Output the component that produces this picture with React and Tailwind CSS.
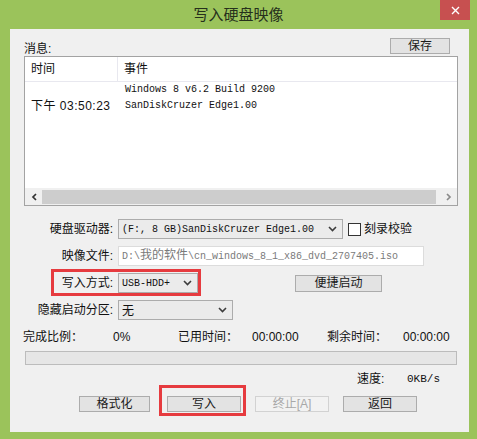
import React from "react";

const Chevron = () => (
  <svg width="9" height="6" viewBox="0 0 9 6" className="shrink-0">
    <path d="M1 1 L4.5 4.5 L8 1" fill="none" stroke="#3c3c3c" strokeWidth="1.6" />
  </svg>
);

// combo box with the little chevron on the right
const Combo = ({ value, className }) => (
  <div
    className={`h-[20px] border border-[#acacac] bg-[#ebebeb] flex items-center pl-[3px] pr-[5px] ${className}`}
  >
    <span className="flex-1 text-[10px] [font-family:'Liberation_Mono','Noto_Sans_CJK_SC',monospace] text-[#111] whitespace-nowrap overflow-hidden">
      {value}
    </span>
    <Chevron />
  </div>
);

const Btn = ({ children, className, disabled }) => (
  <div
    className={`h-[16px] border flex items-center justify-center text-[12px] leading-none ${
      disabled
        ? "border-[#d2d2d2] bg-[#f2f2f2] text-[#a8a8a8]"
        : "border-[#acacac] bg-[#e3e3e3] text-[#1a1a1a]"
    } ${className}`}
  >
    {children}
  </div>
);

export default function App() {
  return (
    <div className="w-[477px] h-[439px] bg-[#9bc35b] flex flex-col [font-family:'Liberation_Sans','Noto_Sans_CJK_SC',sans-serif] text-[#111] overflow-hidden">
      {/* title bar */}
      <div className="h-[29px] flex items-start shrink-0">
        <div className="w-[37px]" />
        <div className="flex-1 text-center text-[15px] leading-[29px] text-[#26301c]">写入硬盘映像</div>
        <div className="w-[30px] h-[20px] bg-[#c75050] flex items-center justify-center">
          <svg width="9" height="9" viewBox="0 0 9 9">
            <path d="M1 1 L8 8 M8 1 L1 8" stroke="#fff" strokeWidth="1.4" />
          </svg>
        </div>
        <div className="w-[7px]" />
      </div>

      {/* client area */}
      <div className="ml-[10px] w-[459px] h-[403px] bg-[#f0f0f0] flex flex-col text-[12px]">
        {/* 消息 header */}
        <div className="mt-[9px] h-[16px] flex items-end">
          <span className="ml-[14px] leading-none mb-[-1px]">消息:</span>
          <Btn className="ml-auto mr-[19px] w-[60px]">保存</Btn>
        </div>

        {/* message list */}
        <div className="mt-[2px] ml-[14px] w-[434px] h-[150px] border border-[#a3a3a3] bg-white flex flex-col">
          <div className="h-[25px] flex border-b border-[#e8e8ef] shrink-0">
            <div className="w-[93px] border-r border-[#e8e8ef] pl-[6px] flex items-center">时间</div>
            <div className="pl-[6px] flex items-center">事件</div>
          </div>
          <div className="flex-1 flex">
            <div className="w-[93px] pl-[6px] pt-[16px]">
              <div className="h-[16px] leading-[16px] whitespace-nowrap tracking-[0.5px]">下午 03:50:23</div>
            </div>
            <div className="pl-[7px] text-[10px] [font-family:'Liberation_Mono','Noto_Sans_CJK_SC',monospace]">
              <div className="h-[16px] leading-[16px]">Windows 8 v6.2 Build 9200</div>
              <div className="h-[16px] leading-[16px]">SanDiskCruzer Edge1.00</div>
            </div>
          </div>
          {/* horizontal scrollbar */}
          <div className="h-[17px] bg-[#f0f0f0] flex items-center shrink-0">
            <div className="w-[17px] flex justify-center">
              <svg width="6" height="8" viewBox="0 0 6 8">
                <path d="M5 1 L2 4 L5 7" fill="none" stroke="#333" strokeWidth="1.7" />
              </svg>
            </div>
            <div className="flex-1 h-[14px] bg-[#cdcdcd] mr-[4px]" />
            <div className="w-[17px] flex justify-center">
              <svg width="6" height="8" viewBox="0 0 6 8">
                <path d="M1 1 L4 4 L1 7" fill="none" stroke="#8a8a8a" strokeWidth="1.7" />
              </svg>
            </div>
          </div>
        </div>

        {/* form rows */}
        <div className="mt-[13px] flex items-center h-[20px]">
          <span className="w-[103px] text-right">硬盘驱动器:</span>
          <Combo value="(F:, 8 GB)SanDiskCruzer Edge1.00" className="ml-[5px] w-[225px]" />
          <div className="ml-[5px] w-[13px] h-[13px] border border-[#333] bg-white" />
          <span className="ml-[3px]">刻录校验</span>
        </div>

        <div className="mt-[7px] flex items-center h-[20px]">
          <span className="w-[103px] text-right">映像文件:</span>
          <div className="ml-[5px] w-[306px] h-[20px] border border-[#dcdcdc] bg-white flex items-center pl-[3px] text-[10px] text-[#7a7a7a] [font-family:'Liberation_Mono','Noto_Sans_CJK_SC',monospace] whitespace-nowrap overflow-hidden">
            D:\<span className="text-[12px]">我的软件</span>\cn_windows_8_1_x86_dvd_2707405.iso
          </div>
        </div>

        <div className="mt-[7px] flex items-center h-[20px] relative">
          <span className="w-[103px] text-right">写入方式:</span>
          <Combo value="USB-HDD+" className="ml-[5px] w-[80px]" />
          <Btn className="ml-[97px] w-[87px] h-[17px]">便捷启动</Btn>
          <div className="absolute left-[41px] top-[-4px] w-[150px] h-[27px] border-[3px] border-[#e63b3f]" />
        </div>

        <div className="mt-[7px] flex items-center h-[20px]">
          <span className="w-[103px] text-right">隐藏启动分区:</span>
          <Combo value={<span className="text-[12px] [font-family:'Noto_Sans_CJK_SC',sans-serif]">无</span>} className="ml-[5px] w-[115px]" />
        </div>

        {/* progress */}
        <div className="mt-[9px] h-[16px] flex items-center whitespace-nowrap">
          <span className="ml-[13px] w-[90px]">完成比例：</span>
          <span className="w-[65px]">0%</span>
          <span className="w-[74px]">已用时间：</span>
          <span className="w-[75px]">00:00:00</span>
          <span className="w-[76px]">剩余时间：</span>
          <span>00:00:00</span>
        </div>

        <div className="mt-[6px] ml-[15px] w-[432px] h-[14px] border border-[#bcbcbc] bg-[#e6e6e6]" />

        <div className="mt-[6px] h-[16px] flex items-center">
          <span className="ml-[347px] w-[50px]">速度:</span>
          <span className="text-[11px] [font-family:'Liberation_Mono',monospace]">0KB/s</span>
        </div>

        {/* buttons */}
        <div className="mt-[9px] flex items-center">
          <Btn className="ml-[69px] w-[71px]">格式化</Btn>
          <div className="ml-[17px] relative">
            <Btn className="w-[74px]">写入</Btn>
            <div className="absolute left-[-8px] top-[-11px] w-[87px] h-[31px] border-[3px] border-[#e63b3f]" />
          </div>
          <Btn disabled className="ml-[14px] w-[74px]">终止[A]</Btn>
          <Btn className="ml-[14px] w-[74px]">返回</Btn>
        </div>
      </div>
    </div>
  );
}
